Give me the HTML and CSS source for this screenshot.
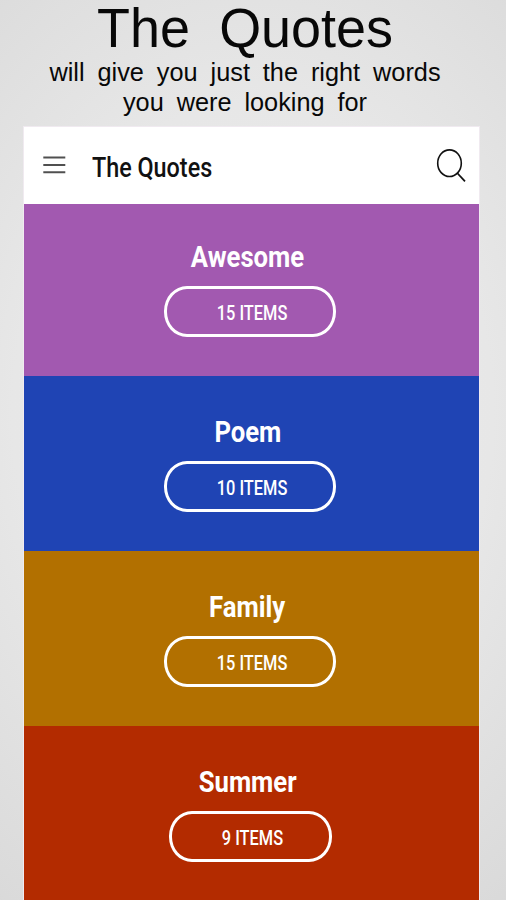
FILE: index.html
```html
<!DOCTYPE html>
<html lang="en">
<head>
<meta charset="utf-8">
<title>The Quotes</title>
<link rel="stylesheet" href="styles.css">
</head>
<body>
<header class="promo">
  <h1>The Quotes</h1>
  <p>will give you just the right words<br>you were looking for</p>
</header>
<main class="app">
  <nav class="bar">
    <svg class="menu" width="24" height="20" viewBox="0 0 24 20"><path d="M1.3 1.6H23.3M1.3 8.9H23.3M1.3 16.2H23.3" stroke="#505050" stroke-width="2" fill="none"/></svg>
    <span class="bar-title">The Quotes</span>
    <svg class="search" width="32" height="36" viewBox="0 0 32 36"><ellipse cx="14.5" cy="15.2" rx="11.8" ry="13.3" fill="none" stroke="#111" stroke-width="1.6"/><path d="M22.2 25L30 33.3" stroke="#111" stroke-width="1.8"/></svg>
  </nav>
  <section class="card awesome"><h2>Awesome</h2><div class="pill"><span>15 ITEMS</span></div></section>
  <section class="card poem"><h2>Poem</h2><div class="pill"><span>10 ITEMS</span></div></section>
  <section class="card family"><h2>Family</h2><div class="pill"><span>15 ITEMS</span></div></section>
  <section class="card summer"><h2>Summer</h2><div class="pill short"><span>9 ITEMS</span></div></section>
</main>
</body>
</html>
```
FILE: styles.css
```css
* { box-sizing: border-box; }
body {
  margin: 0;
  width: 506px;
  height: 900px;
  overflow: hidden;
  display: flex;
  flex-direction: column;
  background: radial-gradient(ellipse 480px 620px at 50% 46%, #ececec 0%, #e7e7e7 50%, #d8d8d8 100%);
  font-family: Roboto, "Liberation Sans", sans-serif;
}
.promo {
  height: 127px;
  flex: none;
  padding-right: 16px;
  text-align: center;
  color: #080808;
  font-family: "Liberation Sans", Arial, sans-serif;
}
.promo h1 {
  margin: 0;
  height: 58px;
  font-size: 55px;
  line-height: 56px;
  font-weight: 400;
  word-spacing: 14.5px;
  transform: scaleX(.98);
}
.promo p {
  margin: 0;
  font-size: 25.3px;
  line-height: 29.5px;
  word-spacing: 5.9px;
  white-space: nowrap;
}
.app {
  width: 455px;
  margin-left: 24px;
  flex: 1;
  display: grid;
  grid-template-rows: 77px 172px 175px 175px 174px;
  box-shadow: 0 0 0 1px #f0eaf0;
}
.bar {
  display: flex;
  align-items: center;
  padding: 0 12px 0 18px;
  background: #fff;
}
.bar-title {
  flex: 1;
  margin-left: 26px;
  padding-top: 5px;
  font-size: 27px;
  font-weight: 500;
  line-height: 32px;
  color: #111;
  white-space: nowrap;
  transform: scaleX(.865);
  transform-origin: left;
}
.card {
  display: flex;
  flex-direction: column;
  align-items: center;
  padding: 35px 3px 0 0;
  color: #fff;
}
.card h2 {
  margin: 0;
  padding-right: 6px;
  font-size: 29.5px;
  line-height: 36px;
  font-weight: 700;
  transform: scaleX(.87);
}
.pill {
  width: 172px;
  height: 51px;
  margin-top: 11px;
  padding: 3px 0 0 4px;
  border: 3px solid #fff;
  border-radius: 23px / 25px;
  display: flex;
  align-items: center;
  justify-content: center;
}
.pill.short { width: 163px; }
.pill span {
  font-size: 19.5px;
  font-weight: 500;
  white-space: nowrap;
  transform: scaleX(.84);
}
.awesome { background: #a259b0; }
.poem { background: #1f44b4; padding-top: 38px; }
.family { background: #b27000; padding-top: 38px; }
.summer { background: #b32b00; padding-top: 38px; }
```
